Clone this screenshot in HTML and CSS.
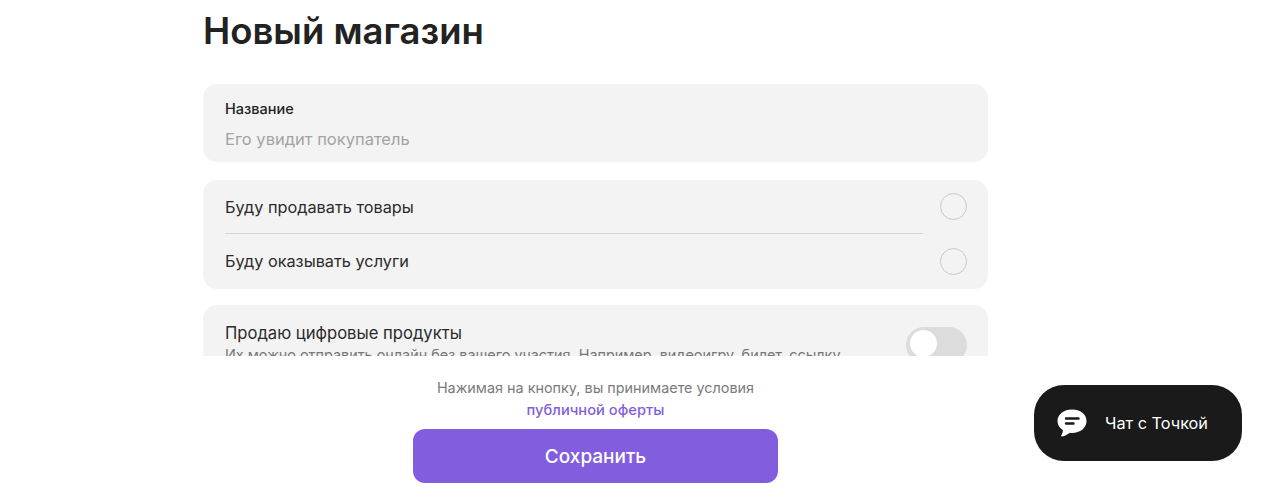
FILE: index.html
```html
<!DOCTYPE html>
<html lang="en">
<head>
    <meta charset="UTF-8">
    <meta name="viewport" content="width=device-width, initial-scale=1.0">
    <title>Новый магазин</title>
    <link rel="stylesheet" href="styles.css">
</head>
<body>
    <div class="form-scroll">
        <div class="column">
            <h1>Новый магазин</h1>
            <div class="card name-card">
                <div class="field-label">Название</div>
                <div class="field-placeholder">Его увидит покупатель</div>
            </div>
            <div class="card type-card">
                <div class="radio-row first">
                    <span>Буду продавать товары</span>
                    <span class="radio"></span>
                </div>
                <div class="radio-row">
                    <span>Буду оказывать услуги</span>
                    <span class="radio"></span>
                </div>
            </div>
            <div class="card digital-card">
                <div class="digital-text">
                    <div class="digital-title">Продаю цифровые продукты</div>
                    <div class="digital-note">Их можно отправить онлайн без вашего участия. Например, видеоигру, билет, ссылку</div>
                </div>
                <span class="toggle"><span class="knob"></span></span>
            </div>
        </div>
    </div>
    <div class="column footer">
        <div class="terms">Нажимая на кнопку, вы принимаете условия</div>
        <a class="offer" href="#">публичной оферты</a>
        <button class="save">Сохранить</button>
    </div>
    <button class="chat">
        <svg class="chat-icon" width="30" height="29" viewBox="0 0 30 29">
            <path d="M15 .5C6.700.5 .5 5.400.5 12c0 3.800 2.100 7 5.300 9 .2 1.800-.4 3.700-1.500 5.200-.4.600 0 1.300.7 1.200 3.100-.4 5.800-1.700 7.700-3.600.7.100 1.500.2 2.300.2 8.300 0 14.500-5 14.500-12S23.300.5 15 .5z" fill="#fff"/>
            <path d="M9 9.500h12.500M9 14.500h7.500" stroke="#1a1a1a" stroke-width="2.400" stroke-linecap="round" fill="none"/>
        </svg>
        <span>Чат с Точкой</span>
    </button>
</body>
</html>
```

FILE: styles.css
```css
body {
    margin: 0;
    height: 496px;
    overflow: hidden;
    background: #fff;
    color: #222;
    font-family: 'Inter', 'Noto Sans', sans-serif;
}
.column {
    width: 785px;
    margin-left: 203px;
}
.form-scroll {
    height: 356px;
    overflow: hidden;
}
h1 {
    margin: 0 0 31px;
    height: 53px;
    font-size: 36.500px;
    line-height: 62px;
    font-weight: 600;
    color: #222;
}
.card {
    box-sizing: border-box;
    background: #f3f3f3;
    border-radius: 14px;
    padding: 0 21px 0 22px;
}
.name-card {
    height: 78px;
    margin-bottom: 18px;
    padding-top: 16px;
}
.field-label {
    font-size: 14.500px;
    line-height: 18px;
    font-weight: 500;
    color: #222;
}
.field-placeholder {
    margin-top: 11px;
    font-size: 16.500px;
    line-height: 20px;
    color: #a3a3a3;
}
.type-card {
    height: 109px;
    margin-bottom: 16px;
}
.radio-row {
    display: flex;
    align-items: center;
    justify-content: space-between;
    height: 54px;
    font-size: 16.300px;
    color: #2b2b2b;
}
.radio-row.first {
    position: relative;
    height: 53px;
    margin-bottom: 1px;
}
.radio-row.first::after {
    content: "";
    position: absolute;
    left: 0;
    right: 44px;
    bottom: -1px;
    height: 1px;
    background: #d6d6d6;
}
.radio {
    box-sizing: border-box;
    width: 27px;
    height: 27px;
    border: 1.500px solid #c8c8c8;
    border-radius: 50%;
}
.digital-card {
    display: flex;
    justify-content: space-between;
    height: 100px;
    padding-top: 18px;
}
.digital-title {
    font-size: 16.600px;
    line-height: 20px;
    color: #2b2b2b;
}
.digital-note {
    margin-top: 2px;
    font-size: 14.400px;
    line-height: 20px;
    color: #777;
}
.toggle {
    display: block;
    flex: none;
    box-sizing: border-box;
    width: 61px;
    height: 36px;
    margin-top: 4px;
    padding: 3px 4px;
    border-radius: 18px;
    background: #dcdcdc;
}
.knob {
    display: block;
    width: 27px;
    height: 27px;
    border-radius: 50%;
    background: #fff;
}
.footer {
    display: flex;
    flex-direction: column;
    align-items: center;
    padding-top: 22px;
}
.terms {
    font-size: 14.400px;
    line-height: 20px;
    color: #7b7b7b;
}
.offer {
    margin-top: 2px;
    font-size: 14.700px;
    line-height: 20px;
    font-weight: 500;
    color: #825ede;
    text-decoration: none;
}
.save {
    width: 365px;
    height: 54px;
    margin-top: 9px;
    border: none;
    border-radius: 12px;
    background: #825ede;
    color: #fff;
    font-family: inherit;
    font-size: 19px;
    font-weight: 500;
}
.chat {
    position: absolute;
    left: 1034px;
    top: 385px;
    display: flex;
    align-items: center;
    gap: 18px;
    width: 208px;
    height: 76px;
    padding: 0 0 0 23px;
    box-sizing: border-box;
    border: none;
    border-radius: 30px;
    background: #1a1a1a;
    color: #fff;
    font-family: inherit;
    font-size: 16.300px;
}
```
